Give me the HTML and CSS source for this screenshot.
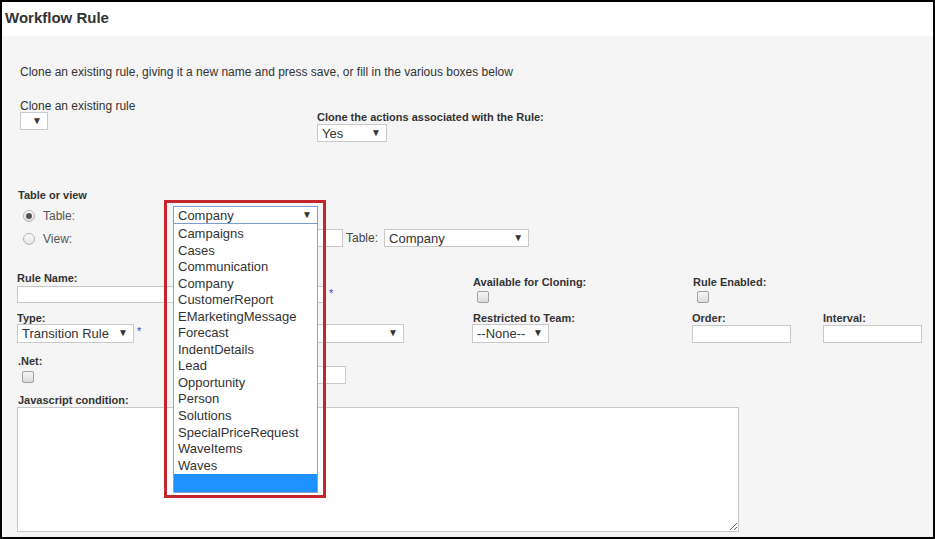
FILE: index.html
```html
<!DOCTYPE html>
<html lang="en">
<head>
  <meta charset="UTF-8" />
  <title>Workflow Rule</title>
  <link rel="stylesheet" href="styles.css">
</head>
<body>
  <div class="frame">
    <div class="header">
      <h1>Workflow Rule</h1>
    </div>

    <div class="panel">
      <p class="intro">Clone an existing rule, giving it a new name and press save, or fill in the various boxes below</p>

      <!-- Clone section -->
      <div class="clone-row">
        <div class="clone-left">
          <div class="plain-label">Clone an existing rule</div>
          <div class="select sel-clone"><span></span></div>
        </div>
        <div class="clone-right">
          <div class="field-label">Clone the actions associated with the Rule:</div>
          <div class="select sel-yes"><span>Yes</span></div>
        </div>
      </div>

      <!-- Table or view -->
      <div class="field-label tov-label">Table or view</div>
      <div class="radio-row">
        <div class="radio-cell">
          <span class="radio checked"></span>
          <span class="radio-text">Table:</span>
        </div>
        <div class="picker">
          <div class="select sel-table focused"><span>Company</span></div>
          <div class="highlight-box"></div>
          <ul class="picker-list">
            <li>Campaigns</li>
            <li>Cases</li>
            <li>Communication</li>
            <li>Company</li>
            <li>CustomerReport</li>
            <li>EMarketingMessage</li>
            <li>Forecast</li>
            <li>IndentDetails</li>
            <li>Lead</li>
            <li>Opportunity</li>
            <li>Person</li>
            <li>Solutions</li>
            <li>SpecialPriceRequest</li>
            <li>WaveItems</li>
            <li>Waves</li>
            <li class="selected"></li>
          </ul>
        </div>
      </div>
      <div class="radio-row view-row">
        <div class="radio-cell">
          <span class="radio"></span>
          <span class="radio-text">View:</span>
        </div>
        <input type="text" class="text-input view-input">
        <span class="inline-label">Table:</span>
        <div class="select sel-view-table"><span>Company</span></div>
      </div>

      <!-- Rule name row -->
      <div class="form-row rule-row">
        <div class="col col-name">
          <div class="field-label">Rule Name:</div>
          <div class="with-star">
            <input type="text" class="text-input name-input">
            <span class="star">*</span>
          </div>
        </div>
        <div class="col col-clone">
          <div class="field-label">Available for Cloning:</div>
          <span class="checkbox"></span>
        </div>
        <div class="col col-enabled">
          <div class="field-label">Rule Enabled:</div>
          <span class="checkbox"></span>
        </div>
      </div>

      <!-- Type row -->
      <div class="form-row type-row">
        <div class="col col-type">
          <div class="field-label">Type:</div>
          <div class="with-star">
            <div class="select sel-type"><span>Transition Rule</span></div>
            <span class="star">*</span>
          </div>
        </div>
        <div class="col col-trigger">
          <div class="select sel-trigger"><span></span></div>
        </div>
        <div class="col col-team">
          <div class="field-label">Restricted to Team:</div>
          <div class="select sel-team"><span>--None--</span></div>
        </div>
        <div class="col col-order">
          <div class="field-label">Order:</div>
          <input type="text" class="text-input small-input">
        </div>
        <div class="col col-interval">
          <div class="field-label">Interval:</div>
          <input type="text" class="text-input small-input">
        </div>
      </div>

      <!-- .Net row -->
      <div class="form-row net-row">
        <div class="col col-type">
          <div class="field-label">.Net:</div>
          <span class="checkbox net-check"></span>
        </div>
        <div class="col col-trigger">
          <input type="text" class="text-input net-input">
        </div>
      </div>

      <!-- Javascript -->
      <div class="js-block">
        <div class="field-label">Javascript condition:</div>
        <textarea class="js-area"></textarea>
      </div>
    </div>
  </div>
</body>
</html>
```

FILE: styles.css
```css
body {
  margin: 0;
  font-family: "Liberation Sans", Arial, sans-serif;
  color: #333;
  background: #fff;
}

.frame {
  width: 935px;
  height: 539px;
  box-sizing: border-box;
  border: 2px solid #000;
  background: #f5f5f5;
  overflow: hidden;
}

.header {
  height: 34px;
  background: #fff;
}

.header h1 {
  margin: 0;
  padding-left: 3px;
  font-size: 15px;
  line-height: 32px;
  font-weight: bold;
  color: #333;
}

.panel {
  padding: 29px 0 0 15px;
}

.intro {
  margin: 0;
  padding-left: 3px;
  font-size: 12px;
  line-height: 14px;
}

/* labels */
.plain-label {
  font-size: 12px;
  line-height: 14px;
  height: 14px;
  padding-top: 1px;
  box-sizing: border-box;
}

.field-label {
  font-size: 11px;
  line-height: 14px;
  font-weight: bold;
  color: #333;
  white-space: nowrap;
}

.inline-label {
  font-size: 12px;
  color: #444;
  margin-left: 3px;
}

.star {
  color: #3b3bd6;
  font-size: 11px;
  margin-left: 3px;
  align-self: flex-start;
  margin-top: 1px;
}

/* fake selects */
.select {
  position: relative;
  box-sizing: border-box;
  height: 18px;
  background: #fff;
  border: 1px solid #c9c9c9;
  font-size: 13px;
  line-height: 17px;
  color: #333;
  padding-left: 4px;
  white-space: nowrap;
}

.select::after {
  content: "\25BC";
  position: absolute;
  right: 5px;
  top: 0;
  font-size: 10px;
  line-height: 15px;
  color: #333;
}

.select.focused {
  border-color: #7d9fd0;
}

/* inputs */
.text-input {
  box-sizing: border-box;
  margin: 0;
  padding: 0 4px;
  background: #fff;
  border: 1px solid #c9c9c9;
  font-family: inherit;
  font-size: 13px;
  outline: none;
}

/* clone section */
.clone-row {
  display: flex;
  margin-top: 19px;
}

.clone-left {
  width: 297px;
  padding-left: 3px;
}

.sel-clone {
  width: 28px;
}

.clone-right {
  padding-top: 12px;
}

.sel-yes {
  width: 70px;
}

/* table or view */
.tov-label {
  margin-top: 46px;
  padding-left: 1px;
}

.radio-row {
  display: flex;
  align-items: center;
  height: 18px;
  margin-top: 4px;
}

.view-row {
  margin-top: 5px;
}

.radio-cell {
  width: 156px;
  display: flex;
  align-items: center;
  padding-top: 1px;
}

.radio {
  box-sizing: border-box;
  width: 12px;
  height: 12px;
  margin-left: 6px;
  border-radius: 50%;
  border: 1px solid #b5b5b5;
  background: linear-gradient(#fdfdfd, #e2e2e2);
  position: relative;
}

.radio.checked::after {
  content: "";
  position: absolute;
  left: 2px;
  top: 2px;
  width: 6px;
  height: 6px;
  border-radius: 50%;
  background: #555;
}

.radio-text {
  margin-left: 8px;
  font-size: 12px;
  color: #555;
}

.picker {
  position: relative;
  z-index: 2;
}

.sel-table {
  width: 145px;
}

.highlight-box {
  position: absolute;
  left: -9px;
  top: -6px;
  width: 162px;
  height: 298px;
  box-sizing: border-box;
  border: 3px solid #c4262e;
}

.picker-list {
  position: absolute;
  left: 0;
  top: 18px;
  width: 145px;
  box-sizing: border-box;
  margin: 0;
  padding: 2px 0 0;
  list-style: none;
  background: #fff;
  border: 1px solid #8ea6c6;
  border-top: none;
}

.picker-list li {
  height: 16.55px;
  line-height: 16.55px;
  padding-left: 4px;
  font-size: 13px;
  color: #333;
}

.picker-list li.selected {
  height: 18px;
  margin-top: 0;
  background: #1e90ff;
}

.view-input {
  width: 170px;
  height: 18px;
}

.sel-view-table {
  width: 145px;
  margin-left: 6px;
}

/* form rows */
.form-row {
  display: flex;
  align-items: flex-start;
}

.rule-row {
  margin-top: 24px;
}

.col-name {
  width: 456px;
}

.with-star {
  display: flex;
  margin-top: 1px;
}

.name-input {
  width: 309px;
  height: 17px;
}

.col-clone {
  width: 220px;
  padding-top: 4px;
}

.col-enabled {
  padding-top: 4px;
}

.checkbox {
  display: block;
  box-sizing: border-box;
  width: 12px;
  height: 12px;
  margin: 2px 0 0 4px;
  border-radius: 2px;
  border: 1px solid #9f9f9f;
  background: linear-gradient(#f6f6f6, #dcdcdc);
}

.type-row {
  margin-top: 8px;
}

.type-row .field-label {
  line-height: 13px;
  height: 13px;
  padding-top: 1px;
  box-sizing: border-box;
}

.col-type {
  width: 223px;
}

.type-row .with-star {
  margin-top: 0;
}

.sel-type {
  width: 117px;
  height: 19px;
  line-height: 18px;
}

.col-trigger {
  width: 233px;
  padding-top: 13px;
}

.sel-trigger {
  width: 164px;
  height: 19px;
}

.col-team {
  width: 219px;
}

.sel-team {
  width: 77px;
  height: 19px;
  line-height: 18px;
  margin-left: -1px;
}

.col-order {
  width: 131px;
}

.small-input {
  width: 99px;
  height: 18px;
  margin-top: 1px;
}

.net-row {
  margin-top: 10px;
}

.net-row .col-type .field-label {
  padding-left: 1px;
  padding-top: 1px;
  height: 14px;
  box-sizing: border-box;
}

.net-check {
  margin: 4px 0 0 5px;
}

.net-row .col-trigger {
  padding-top: 12px;
}

.net-input {
  width: 106px;
  height: 18px;
}

.js-block {
  margin-top: 9px;
}

.js-block .field-label {
  padding-left: 1px;
}

.js-area {
  display: block;
  box-sizing: border-box;
  width: 722px;
  height: 125px;
  margin: 0;
  border: 1px solid #c9c9c9;
  background: #fff;
  font-family: inherit;
}
```
